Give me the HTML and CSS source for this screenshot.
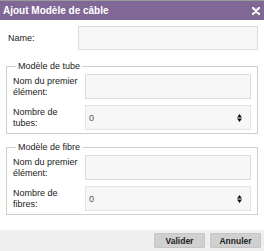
FILE: index.html
```html
<!DOCTYPE html>
<html lang="fr">
<head>
    <meta charset="UTF-8">
    <title>Ajout Modèle de câble</title>
    <link rel="stylesheet" href="styles.css">
</head>
<body>
    <div class="dialog">
        <div class="titlebar">
            <span class="title">Ajout Modèle de câble</span>
            <svg class="close" width="8" height="8" viewBox="0 0 8 8">
                <path d="M1 1l6 6M7 1L1 7" stroke="#fff" stroke-width="2.2" stroke-linecap="round"/>
            </svg>
        </div>

        <div class="content">
            <div class="row row-name">
                <label class="label">Name:</label>
                <input class="field" type="text">
            </div>

            <fieldset class="group">
                <legend>Modèle de tube</legend>
                <div class="row">
                    <label class="label">Nom du premier élément:</label>
                    <input class="field" type="text">
                </div>
                <div class="row">
                    <label class="label">Nombre de tubes:</label>
                    <div class="field number">
                        <span class="value">0</span>
                        <svg class="spin" width="5" height="8" viewBox="0 0 5 8">
                            <path d="M2.5 0L5 3.4H0zM2.5 8L5 4.6H0z" fill="#111"/>
                        </svg>
                    </div>
                </div>
            </fieldset>

            <fieldset class="group">
                <legend>Modèle de fibre</legend>
                <div class="row">
                    <label class="label">Nom du premier élément:</label>
                    <input class="field" type="text">
                </div>
                <div class="row">
                    <label class="label">Nombre de fibres:</label>
                    <div class="field number">
                        <span class="value">0</span>
                        <svg class="spin" width="5" height="8" viewBox="0 0 5 8">
                            <path d="M2.5 0L5 3.4H0zM2.5 8L5 4.6H0z" fill="#111"/>
                        </svg>
                    </div>
                </div>
            </fieldset>
        </div>

        <div class="footer">
            <button class="button">Valider</button>
            <button class="button">Annuler</button>
        </div>
    </div>
</body>
</html>
```

FILE: styles.css
```css
* {
    margin: 0;
    padding: 0;
    box-sizing: border-box;
    font-family: "Liberation Sans", Arial, sans-serif;
}

body {
    background: #ffffff;
    color: #222222;
    font-size: 9px;
}

/* Dialog */
.dialog {
    width: 264px;
    height: 251px;
    display: flex;
    flex-direction: column;
    border-top: 1px solid #9a9a9a;
}

.titlebar {
    height: 19px;
    background: #806896;
    display: flex;
    align-items: center;
    justify-content: space-between;
    padding: 0 4px 0 3px;
}

.title {
    color: #ffffff;
    font-weight: bold;
    font-size: 10px;
}

.close {
    display: block;
}

.content {
    padding: 6px 6px 0 6px;
}

/* Rows */
.row {
    display: flex;
    align-items: center;
}

.row + .row {
    margin-top: 6px;
}

.label {
    width: 72px;
    padding-right: 6px;
    line-height: 11px;
}

.row-name .label {
    padding-left: 2px;
}

.field {
    flex: 1;
    height: 25px;
    background: #f7f7f7;
    border: 1px solid #dcdcdc;
    font-size: 9px;
}

.row-name .field {
    height: 24px;
}

.number {
    display: flex;
    align-items: center;
    justify-content: space-between;
    padding: 0 8px 0 3px;
    border-color: #e4e4e4;
}

.value {
    color: #555555;
}

.spin {
    display: block;
}

/* Groups */
.group {
    border: 1px solid #cfcfcf;
    padding: 3px 6px 3px 6px;
    margin-top: 11px;
    min-inline-size: 0;
}

.group + .group {
    margin-top: 8px;
}

.group legend {
    font-size: 9px;
    line-height: 10px;
    margin-left: 3px;
    padding: 0 2px;
}

/* Footer */
.footer {
    margin-top: auto;
    height: 21px;
    background: #efefef;
    display: flex;
    justify-content: flex-end;
    align-items: center;
    gap: 5px;
    padding-right: 3px;
}

.button {
    width: 51px;
    height: 15px;
    background: #d0d0d0;
    border: 1px solid #c6c6c6;
    border-radius: 1px;
    color: #222222;
    font-size: 8.5px;
    font-weight: bold;
}
```
